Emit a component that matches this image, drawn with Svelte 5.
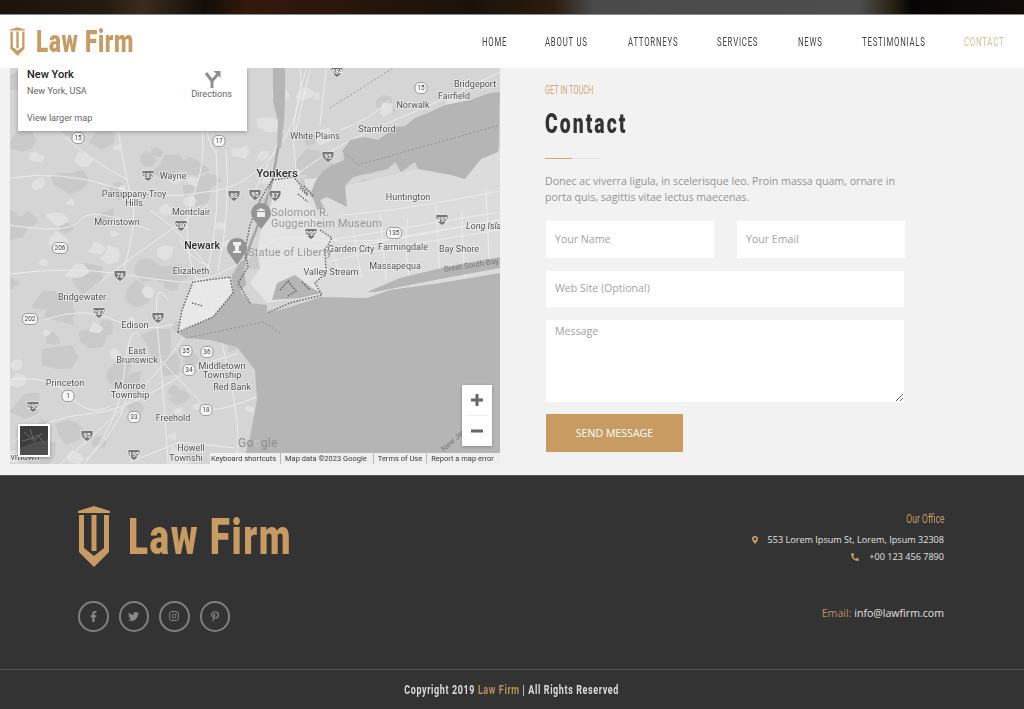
<script>
	const navItems = ['Home', 'About Us', 'Attorneys', 'Services', 'News', 'Testimonials', 'Contact'];

	// page coordinates, the map svg's viewBox starts at 10,68
	const labels = [
		['Bridgeport', 475, 87], ['Fairfield', 454, 99], ['Norwalk', 413, 108], ['Stamford', 377, 132],
		['White Plains', 315, 139], ['Huntington', 408, 200], ['Wayne', 173, 179], ['Parsippany-Troy', 134, 197],
		['Hills', 134, 206], ['Montclair', 191, 215], ['Morristown', 117, 225], ['Elizabeth', 191, 274],
		['Garden City', 351, 252], ['Farmingdale', 403, 250], ['Bay Shore', 459, 252], ['Valley Stream', 331, 275],
		['Massapequa', 395, 269], ['Bridgewater', 82, 300], ['Edison', 135, 328], ['East', 137, 354],
		['Brunswick', 137, 363], ['Middletown', 222, 369], ['Township', 222, 378], ['Red Bank', 232, 390],
		['Princeton', 65, 386], ['Monroe', 130, 389], ['Township', 130, 398], ['Freehold', 173, 421],
		['Howell', 191, 451], ['Townshi', 186, 461], ['vittown', 25, 460]
	];
	const interstates = [
		['684', 337, 72], ['287', 148, 176], ['80', 234, 196], ['95', 255, 195], ['87', 275, 196], ['280', 181, 226],
		['78', 120, 276], ['287', 99, 313], ['95', 158, 318], ['95', 328, 157], ['295', 311, 234], ['495', 442, 220],
		['295', 33, 407], ['95', 87, 436], ['195', 134, 455]
	];
	const routes = [
		['15', 78, 138], ['17', 219, 141], ['206', 60, 248], ['202', 30, 319], ['135', 394, 233], ['15', 421, 88],
		['35', 186, 351], ['36', 207, 352], ['34', 189, 370], ['1', 68, 396], ['33', 134, 417], ['18', 206, 410]
	];
	const roads = [
		'M10 178q50-8 100 8t95 6q40-2 70-40t25-85', 'M10 274q60-8 110 0t70 8q40-8 65-30t60-12q60 4 110-6t75-14',
		'M205 300q-30-60-10-110t-10-122', 'M12 442q40-26 75-28t80-30q30-20 70-30', 'M78 300q60-50 130-95', 'M118 130q8 50 14 70t-10 76',
		'M168 464q-4-70-10-130t10-34', 'M60 464q60-50 95-90t50-76', 'M330 240q50-8 170-28', 'M325 262q80-18 175-32',
		'M352 220q5 40 10 58', 'M408 218q-6 30 4 70', 'M462 212q0 40 4 70', 'M300 172q40-30 90-50t110-50',
		'M250 200q20-40 34-70', 'M296 170q-8-50 10-100', 'M206 290q20 60 28 110t0 64', 'M84 464q35-40 40-90t15-40',
		'M130 462l50-20 55 6', 'M210 68q-14 50 5 85', 'M10 225q60 10 70-5t70 10', 'M44 320q40-14 70 0t60 4',
		'M160 360q30 30 48 50q20 0 50-14', 'M150 210q30 20 60 60', 'M180 240q10 20 30 26', 'M216 150q5 60-8 120',
		'M226 150q5 60-8 120', 'M300 215q30 20 40 60', 'M270 230q40-12 60-10', 'M262 262q30-8 60-6', 'M340 130q30-10 50-30', 'M10 380q40-6 60 16t40 10',
		'M126 400q-8 30-40 60', 'M58 130q30 30 70 50', 'M340 215q60-4 160-24', 'M340 250q60-14 160-30', 'M380 215l6 66', 'M436 205l4 70',
		'M486 190l3 70', 'M296 130l14-60', 'M320 125l6-55'
	];

	// scattered woodland and town patches, seeded so that every run draws the same map
	let seed = 41;
	function rnd() {
		seed = (seed * 16807) % 2147483647;
		return seed / 2147483647;
	}
	function patch(minR, maxR) {
		const cx = 10 + rnd() * 490;
		const cy = 68 + rnd() * 396;
		const r = minR + rnd() * (maxR - minR);
		const pts = [];
		for (let i = 0; i < 7; i++) {
			const a = (i / 7) * Math.PI * 2;
			const d = r * (0.45 + rnd() * 0.75);
			pts.push(`${(cx + Math.cos(a) * d).toFixed(1)},${(cy + Math.sin(a) * d * 0.8).toFixed(1)}`);
		}
		return pts.join(' ');
	}
	const parks = Array.from({ length: 95 }, () => patch(5, 18));
	const lights = Array.from({ length: 85 }, () => patch(3, 11));
</script>

<div class="hero-strip"></div>

<header class="site-header">
	<a class="logo small" href="#top">
		<svg class="mark" viewBox="0 0 32 61"><path d="M0 5 16 0l16 5v2H0zM1 9h5v33l10 8 10-8V9h5v37L16 61 1 46zM13.500 9h5v36h-5z" /></svg>
		<span class="brand"><span>Law Firm</span></span>
	</a>
	<nav>
		{#each navItems as item, i}
			<a href="#top" class:active={i === navItems.length - 1}><span>{item}</span></a>
		{/each}
	</nav>
</header>

<main>
	<div class="map">
		<svg viewBox="10 68 490 396" width="490" height="396">
			<rect x="10" y="68" width="490" height="396" fill="#d5d5d5" />
			{#each parks as points}<polygon {points} class="park" />{/each}
			{#each lights as points}<polygon {points} class="light" />{/each}
			<!-- long island, the city, staten island -->
			<path d="M305 195 500 150v130L300 312z" fill="#dcdcdc" />
			<path d="M272 179l22-2 14 18 12 35 13 8-8 12 1 23-11 10 7 12-55 8-17-20 10-15-3-17 5-25 10-25z" fill="#e4e4e4" />
			<path d="M178 332l4-22 11-28 37-5 3 16-20 24z" fill="#e8e8e8" />
			{#each roads as d}<path {d} class="road" />{/each}
			<!-- water -->
			<path class="water" d="M500 92l-10 1-20 7-25 5-15 7-15 6-10 8-10 1-10 8-7 5-13-3-15 3-7 10 1 10-12 5-10 7-7 10-5 13 4 5 3 10 7-3-4-7 7-3 20 10-2-21 8-9 35-8 7-7 6 10 14-10 3 7 33 6 14 4 16-20 17-7z" />
			<path class="water" d="M240 262l7-4-3 12 2 15-6 6 10 12 17 2v8l23-6 30-10 47 1 23-8 50-7 60-10v191H243l7-27 7-37-2-30-18-23-27-7-25-2-7-5 35-16 20-24-1-18z" />
			<path class="water" d="M367 292l33-14 50-12 50-9v11l-60 11-65 13z" />
			<path class="water" d="M277 283l18-8 17 13 10 5-22 5-28 2z" />
			<path d="M273 68h12v33l-1 20-3 27-4 1 1-28-5-20z" fill="#b5b5b5" />
			<path d="M278 148l-5 30-11 37-12 30-5 15" fill="none" stroke="#a5a5a5" stroke-width="2.500" />
			<!-- maritime lines -->
			<path class="boundary" d="M330 108 393 68M343 151l15 14 142-40M187 338l76-16 19 12" />
			<!-- city limits -->
			<path class="city" d="M178 332l4-22 11-28 37-5 3 16-20 24zM192 303l11 3M272 180l22-3 14 18M320 230l12 8-7 12 1 23-11 10 7 12-32 8-23 10M250 303l-12-20 10-16-3-17 5-25 10-25 12-20" />
			<path class="city" d="M300 188l8 8M304 186l9 10M298 194l10 8M280 290l8-9 8 10-8 5M302 282l8 8" />
			<!-- pins -->
			<path d="M261 203a10 10 0 0 1 7 17l-7 9-7-9a10 10 0 0 1 7-17z" fill="#949494" />
			<path d="M256 211h10l-5-3zM257 212h8v5h-8z" fill="#eee" />
			<path d="M237 238a10 10 0 0 1 7 17l-7 10-7-10a10 10 0 0 1 7-17z" fill="#949494" />
			<path d="M233 242h8v3l-2 1v5h2v2h-8v-2h2v-5l-2-1z" fill="#eee" />

			{#each labels as [text, x, y]}
				<text {x} {y} class="place">{text}</text>
			{/each}
			<text x="277" y="177" class="city-name">Yonkers</text>
			<text x="202" y="249" class="city-name small-city">Newark</text>
			<text x="44" y="436" class="city-name small-city">on</text>
			<text x="271" y="216" class="poi">Solomon R.</text>
			<text x="271" y="227" class="poi">Guggenheim Museum</text>
			<text x="248" y="256" class="poi">Statue of Liberty</text>
			<text x="466" y="229" class="place italic">Long Isla</text>
			<text x="444" y="272" class="bay" transform="rotate(-9 444 272)">Great South Bay</text>
			<text x="444" y="452" class="bay" transform="rotate(-42 444 452)">New Jer</text>

			{#each interstates as [n, x, y]}
				<g transform="translate({x} {y})">
					<path d="M-6-5.500h12v1.500q1 5-6 9.500q-7-4.500-6-9.500z" fill="#777" stroke="#eee" stroke-width=".8" />
					<text y="2" class="shield">{n}</text>
				</g>
			{/each}
			{#each routes as [n, x, y]}
				<g transform="translate({x} {y})">
					<rect x={n.length > 2 ? -7.500 : -6} y="-5.500" width={n.length > 2 ? 15 : 12} height="11" rx="4.500" fill="#f7f7f7" stroke="#777" stroke-width=".7" />
					<text y="2.200" class="route">{n}</text>
				</g>
			{/each}
		</svg>

		<div class="place-card">
			<div>
				<div class="card-title">New York</div>
				<div class="card-sub">New York, USA</div>
				<div class="card-link">View larger map</div>
			</div>
			<div class="directions">
				<svg viewBox="0 0 18 18" width="18" height="18"><path d="M9 18v-7L3 3M9 11l6-7" fill="none" stroke="#8f8f8f" stroke-width="3" /><path d="M10.500 1H17.500V8z" fill="#8f8f8f" /></svg>
				<span>Directions</span>
			</div>
		</div>

		<div class="zoom">
			<svg viewBox="0 0 30 61" width="30" height="61">
				<path d="M9 15h12M15 9v12M9 46h12" stroke="#666" stroke-width="3" />
				<path d="M4 30.500h22" stroke="#eee" stroke-width="1" />
			</svg>
		</div>
		<div class="thumb">
			<svg viewBox="0 0 28 29" width="28" height="29">
				<rect width="28" height="29" fill="#3c3c3c" />
				<path d="M0 22l14-6 14-2v15H0z" fill="#4f4f4f" />
				<path d="M4 6l8 7 6-4 6 8M10 3l4 12 8-8M2 15l12-3" fill="none" stroke="#6a6a6a" stroke-width="1" />
			</svg>
		</div>
		<span class="google">Go<i>o</i>gle</span>
		<div class="attribution">
			<span>Keyboard shortcuts</span><span>Map data ©2023 Google</span><span>Terms of Use</span><span>Report a map error</span>
		</div>
	</div>

	<section class="contact">
		<p class="eyebrow"><span>Get in touch</span></p>
		<h1><span>Contact</span></h1>
		<div class="rule"></div>
		<p class="intro">Donec ac viverra ligula, in scelerisque leo. Proin massa quam, ornare in porta quis, sagittis vitae lectus maecenas.</p>
		<form>
			<div class="row">
				<input type="text" placeholder="Your Name" />
				<input type="text" placeholder="Your Email" />
			</div>
			<input class="site" type="text" placeholder="Web Site (Optional)" />
			<textarea placeholder="Message"></textarea>
			<button type="button">Send Message</button>
		</form>
	</section>
</main>

<footer>
	<div class="footer-top">
		<div class="footer-left">
			<a class="logo big" href="#top">
				<svg class="mark" viewBox="0 0 32 61"><path d="M0 5 16 0l16 5v2H0zM1 9h5v33l10 8 10-8V9h5v37L16 61 1 46zM13.500 9h5v36h-5z" /></svg>
				<span class="brand"><span>Law Firm</span></span>
			</a>
			<div class="social">
				<a href="#top" aria-label="Facebook"><svg viewBox="0 0 320 512" width="7" height="11"><path d="M279.140 288l14.220-92.660h-88.910v-60.130c0-25.350 12.420-50.060 52.240-50.060h40.420V6.260S260.430 0 225.360 0c-73.220 0-121.080 44.380-121.080 124.720v70.620H22.890V288h81.390v224h100.170V288z" /></svg></a>
				<a href="#top" aria-label="Twitter"><svg viewBox="0 0 512 512" width="11" height="11"><path d="M459.370 151.716c.325 4.548.325 9.097.325 13.645 0 138.720-105.583 298.558-298.558 298.558-59.452 0-114.680-17.219-161.137-47.106 8.447.974 16.568 1.299 25.340 1.299 49.055 0 94.213-16.568 130.274-44.832-46.132-.975-84.792-31.188-98.112-72.772 6.498.974 12.995 1.624 19.818 1.624 9.421 0 18.843-1.300 27.614-3.573-48.081-9.747-84.143-51.980-84.143-102.985v-1.299c13.969 7.797 30.214 12.670 47.431 13.319-28.264-18.843-46.781-51.005-46.781-87.391 0-19.492 5.197-37.360 14.294-52.954 51.655 63.675 129.300 105.258 216.365 109.807-1.624-7.797-2.599-15.918-2.599-24.040 0-57.828 46.782-104.934 104.934-104.934 30.213 0 57.502 12.670 76.670 33.137 23.715-4.548 46.456-13.320 66.599-25.340-7.798 24.366-24.366 44.833-46.132 57.827 21.117-2.273 41.584-8.122 60.426-16.243-14.292 20.791-32.161 39.308-52.628 54.253z" /></svg></a>
				<a href="#top" aria-label="Instagram"><svg viewBox="0 0 12 12" width="10" height="10"><rect x=".6" y=".6" width="10.800" height="10.800" rx="2.800" fill="none" stroke="#8a8a8a" stroke-width="1.100" /><circle cx="6" cy="6" r="2.400" fill="none" stroke="#8a8a8a" stroke-width="1.100" /><circle cx="9" cy="3" r=".7" /></svg></a>
				<a href="#top" aria-label="Pinterest"><svg viewBox="0 0 384 512" width="8" height="11"><path d="M204 6.500C101.400 6.500 0 74.900 0 185.600 0 256 39.600 296 63.600 296c9.900 0 15.600-27.600 15.600-35.400 0-9.300-23.700-29.100-23.700-67.800 0-80.400 61.200-137.400 140.400-137.400 68.100 0 118.500 38.700 118.500 109.800 0 53.100-21.300 152.700-90.300 152.700-24.900 0-46.200-18-46.200-43.800 0-37.800 26.400-74.400 26.400-113.400 0-66.200-93.900-54.200-93.900 25.800 0 16.800 2.100 35.400 9.600 50.700-13.800 59.400-42 147.900-42 209.100 0 18.900 2.700 37.500 4.500 56.400 3.400 3.800 1.700 3.400 6.900 1.500 50.400-69 48.600-82.500 71.400-172.800 12.300 23.400 44.100 36 69.300 36 106.200 0 153.900-103.500 153.900-196.800C384 71.300 298.200 6.500 204 6.500z" /></svg></a>
			</div>
		</div>
		<div class="footer-right">
			<h4><span>Our Office</span></h4>
			<p class="line"><svg viewBox="0 0 12 16" width="6" height="8"><path fill-rule="evenodd" d="M6 0a6 6 0 0 1 6 6c0 3.500-4 7.500-6 10-2-2.500-6-6.500-6-10a6 6 0 0 1 6-6zm0 3.500a2.500 2.500 0 1 0 0 5 2.500 2.500 0 0 0 0-5z" /></svg>553 Lorem Ipsum St, Lorem, Ipsum 32308</p>
			<p class="line"><svg viewBox="0 0 512 512" width="8" height="8"><path transform="matrix(-1 0 0 1 512 0)" d="M493.400 24.600l-104-24c-11.300-2.600-22.900 3.300-27.500 13.900l-48 112c-4.200 9.800-1.400 21.300 6.900 28l60.600 49.600c-36 76.700-98.900 140.500-177.200 177.200l-49.600-60.600c-6.800-8.300-18.200-11.100-28-6.900l-112 48C3.900 366.500-2 378.100.6 389.400l24 104C27.100 504.200 36.700 512 48 512c256.100 0 464-207.500 464-464 0-11.200-7.700-20.900-18.600-23.400z" /></svg>+00 123 456 7890</p>
			<p class="email"><span>Email:</span> info@lawfirm.com</p>
		</div>
	</div>
	<div class="copyright"><div>Copyright 2019 <span>Law Firm</span> | All Rights Reserved</div></div>
</footer>

<style>
	:global(body) {
		margin: 0;
		background: #f2f2f2;
		font-family: 'Open Sans', sans-serif;
	}

	.hero-strip {
		height: 15px;
		border-bottom: 1px solid #8a8a8a;
		box-sizing: border-box;
		background: linear-gradient(90deg, #1c130c 0%, #241a10 10%, #3a2c1e 14%, #120d08 20%, #33190e 24%, #1a120a 46%, #2a1c0e 54%, #4a4a4a 58%, #4d4d4d 84%, #2b2416 87%, #060505 89%, #120c08 100%);
	}

	.site-header {
		height: 53px;
		background: #fff;
		display: flex;
		align-items: center;
		justify-content: space-between;
		padding: 0 20px 0 10px;
	}

	.logo {
		display: flex;
		align-items: center;
		color: #c89b63;
		text-decoration: none;
		font-family: 'Roboto', sans-serif;
		font-weight: 900;
		white-space: nowrap;
	}

	.mark {
		fill: #c89b63;
		flex-shrink: 0;
	}

	/* no condensed face installed: the headline type is squeezed sideways */
	.brand span,
	nav span,
	.eyebrow span,
	h1 span {
		display: block;
		transform-origin: left center;
		white-space: nowrap;
	}

	.logo.small {
		gap: 11px;
		font-size: 31px;
		letter-spacing: 1px;
	}

	.logo.small .mark {
		width: 15px;
		height: 29px;
	}

	.logo.small .brand {
		width: 97px;
	}

	.logo.small .brand span {
		transform: scaleX(0.725);
	}

	.logo.big {
		gap: 18px;
		font-size: 50px;
		letter-spacing: 2.100px;
	}

	.logo.big .mark {
		width: 32px;
		height: 61px;
	}

	.logo.big .brand {
		width: 162px;
	}

	.logo.big .brand span {
		transform: scaleX(0.738);
	}

	nav {
		display: grid;
		grid-template-columns: 25px 45px 51px 43px 26px 64px 40px;
		gap: 38px;
	}

	nav a {
		font-family: 'Roboto', sans-serif;
		font-size: 13px;
		letter-spacing: 1.300px;
		color: #444;
		text-transform: uppercase;
		text-decoration: none;
	}

	nav span {
		transform: scaleX(0.6);
	}

	nav a.active {
		color: #dcbd95;
	}

	main {
		height: 407px;
		display: flex;
		align-items: flex-start;
		padding-left: 10px;
	}

	.map {
		position: relative;
		width: 490px;
		height: 396px;
		overflow: hidden;
		flex-shrink: 0;
	}

	.map > svg {
		display: block;
		filter: blur(0.4px);
	}

	.park {
		fill: #cacaca;
		stroke: #cacaca;
		stroke-width: 3;
		stroke-linejoin: round;
	}

	.light {
		fill: #e1e1e1;
		stroke: #e1e1e1;
		stroke-width: 2;
		stroke-linejoin: round;
	}

	.road {
		fill: none;
		stroke: #ececec;
		stroke-width: 1;
	}

	.water {
		fill: #b5b5b5;
	}

	.boundary {
		fill: none;
		stroke: #8a8a8a;
		stroke-width: 0.8;
		stroke-dasharray: 2 2;
	}

	.city {
		fill: none;
		stroke: #5e5e5e;
		stroke-width: 1.400;
		stroke-dasharray: 1.500 1.500;
	}

	.map text {
		font-family: 'Roboto', sans-serif;
		text-anchor: middle;
	}

	.map .place {
		font-size: 9px;
		fill: #505050;
		paint-order: stroke;
		stroke: rgba(255, 255, 255, 0.6);
		stroke-width: 1.500px;
	}

	.map .italic {
		font-style: italic;
		text-anchor: start;
	}

	.map .city-name {
		font-size: 11.500px;
		font-weight: 500;
		fill: #2a2a2a;
		paint-order: stroke;
		stroke: rgba(255, 255, 255, 0.6);
		stroke-width: 1.500px;
	}

	.map .small-city {
		font-size: 10.500px;
	}

	.map .poi {
		font-size: 11px;
		fill: #989898;
		text-anchor: start;
		letter-spacing: 0.2px;
	}

	.map .bay {
		font-size: 7.800px;
		fill: #777;
		text-anchor: start;
	}

	.map .shield {
		font-size: 6.500px;
		font-weight: 700;
		fill: #f5f5f5;
	}

	.map .route {
		font-size: 6.500px;
		fill: #444;
	}

	.place-card {
		position: absolute;
		left: 8px;
		top: 0;
		width: 229px;
		height: 63px;
		box-sizing: border-box;
		padding: 0 15px 0 9px;
		background: #fff;
		box-shadow: 0 1px 4px rgba(0, 0, 0, 0.3);
		display: flex;
		justify-content: space-between;
		font-family: 'Roboto', sans-serif;
		color: #666;
		font-size: 9.100px;
	}

	.card-title {
		font-size: 11px;
		line-height: 13px;
		font-weight: 500;
		color: #222;
	}

	.card-sub {
		margin-top: 4px;
		line-height: 13px;
	}

	.card-link {
		margin-top: 14px;
		line-height: 13px;
	}

	.directions {
		display: flex;
		flex-direction: column;
		align-items: center;
		padding-top: 2px;
		gap: 1px;
		color: #666;
	}

	.zoom {
		position: absolute;
		left: 452px;
		top: 317px;
		width: 30px;
		height: 61px;
		background: #fff;
		box-shadow: 0 1px 3px rgba(0, 0, 0, 0.25);
	}

	.zoom svg,
	.thumb svg {
		display: block;
	}

	.thumb {
		position: absolute;
		left: 8px;
		top: 356px;
		width: 28px;
		height: 29px;
		border: 2px solid #fff;
		box-shadow: 0 1px 3px rgba(0, 0, 0, 0.3);
	}

	.google {
		position: absolute;
		left: 228px;
		top: 368px;
		font: 12px 'Roboto', sans-serif;
		color: #8f8f8f;
		letter-spacing: 0.3px;
	}

	.google i {
		font-style: normal;
		color: #c4c4c4;
	}

	.attribution {
		position: absolute;
		right: 0;
		bottom: 0;
		height: 11px;
		width: 290px;
		box-sizing: border-box;
		background: rgba(245, 245, 245, 0.9);
		display: flex;
		padding-left: 1px;
		font: 7.500px/11px 'Roboto', sans-serif;
		color: #3a3a3a;
		white-space: nowrap;
		opacity: 0.99;
	}

	.attribution span {
		padding: 0 4px;
		border-right: 1px solid #bbb;
	}

	.attribution span:first-child {
		padding-left: 0;
	}

	.attribution span:nth-child(2) {
		padding-right: 6px;
	}

	.attribution span:last-child {
		border-right: 0;
	}

	.contact {
		margin-left: 45px;
		width: 359px;
	}

	.eyebrow {
		margin: 14px 0 0;
		font: 12.500px/16px 'Roboto', sans-serif;
		color: #d3a873;
		text-transform: uppercase;
	}

	.eyebrow span {
		transform: scaleX(0.585);
	}

	h1 {
		margin: 7px 0 0;
		font: 900 28px/38px 'Roboto', sans-serif;
		letter-spacing: 3px;
		color: #333;
	}

	h1 span {
		transform: scaleX(0.69);
	}

	.rule {
		margin-top: 15px;
		width: 55px;
		height: 1px;
		background: linear-gradient(90deg, #d9a66c 27px, #e3e3e3 27px);
	}

	.intro {
		margin: 14px 0 0;
		font-size: 10.600px;
		line-height: 16px;
		color: #929292;
		width: 358px;
	}

	form {
		margin-top: 16px;
		margin-left: 1px;
		display: flex;
		flex-direction: column;
		gap: 13px;
		align-items: flex-start;
	}

	.row {
		display: flex;
		gap: 23px;
	}

	input,
	textarea {
		box-sizing: border-box;
		border: 0;
		outline: 0;
		border-radius: 0;
		background: #fff;
		padding: 0 9px 2px;
		width: 358px;
		height: 37px;
		font: 10.600px 'Open Sans', sans-serif;
		color: #555;
		display: block;
	}

	.row input {
		width: 168px;
	}

	.site {
		height: 36px;
	}

	textarea {
		height: 82px;
		padding-top: 4px;
		line-height: 14px;
	}

	input::placeholder,
	textarea::placeholder {
		color: #a3a3a3;
		opacity: 1;
	}

	button {
		margin-top: -1px;
		width: 137px;
		height: 38px;
		border: 0;
		background: #c89b63;
		color: #fff;
		font: 10.600px 'Open Sans', sans-serif;
		text-transform: uppercase;
	}

	footer {
		height: 234px;
		box-sizing: border-box;
		background: #333;
		border-top: 1px solid #555;
		display: flex;
		flex-direction: column;
	}

	.footer-top {
		flex: 1;
		display: flex;
		justify-content: space-between;
		padding: 30px 80px 0 78px;
	}

	.social {
		margin-top: 34px;
		display: flex;
		gap: 10px;
	}

	.social a {
		width: 30.500px;
		height: 30.500px;
		box-sizing: border-box;
		border: 2px solid #7f7f7f;
		border-radius: 50%;
		display: flex;
		align-items: center;
		justify-content: center;
	}

	.social svg {
		fill: #8a8a8a;
	}

	.footer-right {
		text-align: right;
		color: #e2e2e2;
	}

	.footer-right h4 {
		margin: 5px 0 0;
		font: 400 13px/16px 'Roboto', sans-serif;
		color: #c89b63;
	}

	.footer-right h4 span {
		display: block;
		transform: scaleX(0.665);
		transform-origin: right center;
	}

	.line {
		margin: 6px 0 0;
		font-size: 9.100px;
		line-height: 13px;
		display: flex;
		justify-content: flex-end;
		align-items: center;
		gap: 10px;
	}

	.line + .line {
		margin-top: 4px;
	}

	.line svg {
		fill: #c89b63;
	}

	.email {
		margin: 42px 0 0;
		font-size: 10.600px;
		line-height: 16px;
	}

	.email span {
		color: #b8925f;
	}

	.copyright {
		height: 39px;
		border-top: 1px solid #555;
		display: flex;
		align-items: center;
		justify-content: center;
		font: 700 13px 'Roboto', sans-serif;
		letter-spacing: 0.9px;
		color: #ddd;
		white-space: nowrap;
	}

	.copyright div {
		transform: scaleX(0.69);
	}

	.copyright span {
		color: #b8925f;
	}
</style>
